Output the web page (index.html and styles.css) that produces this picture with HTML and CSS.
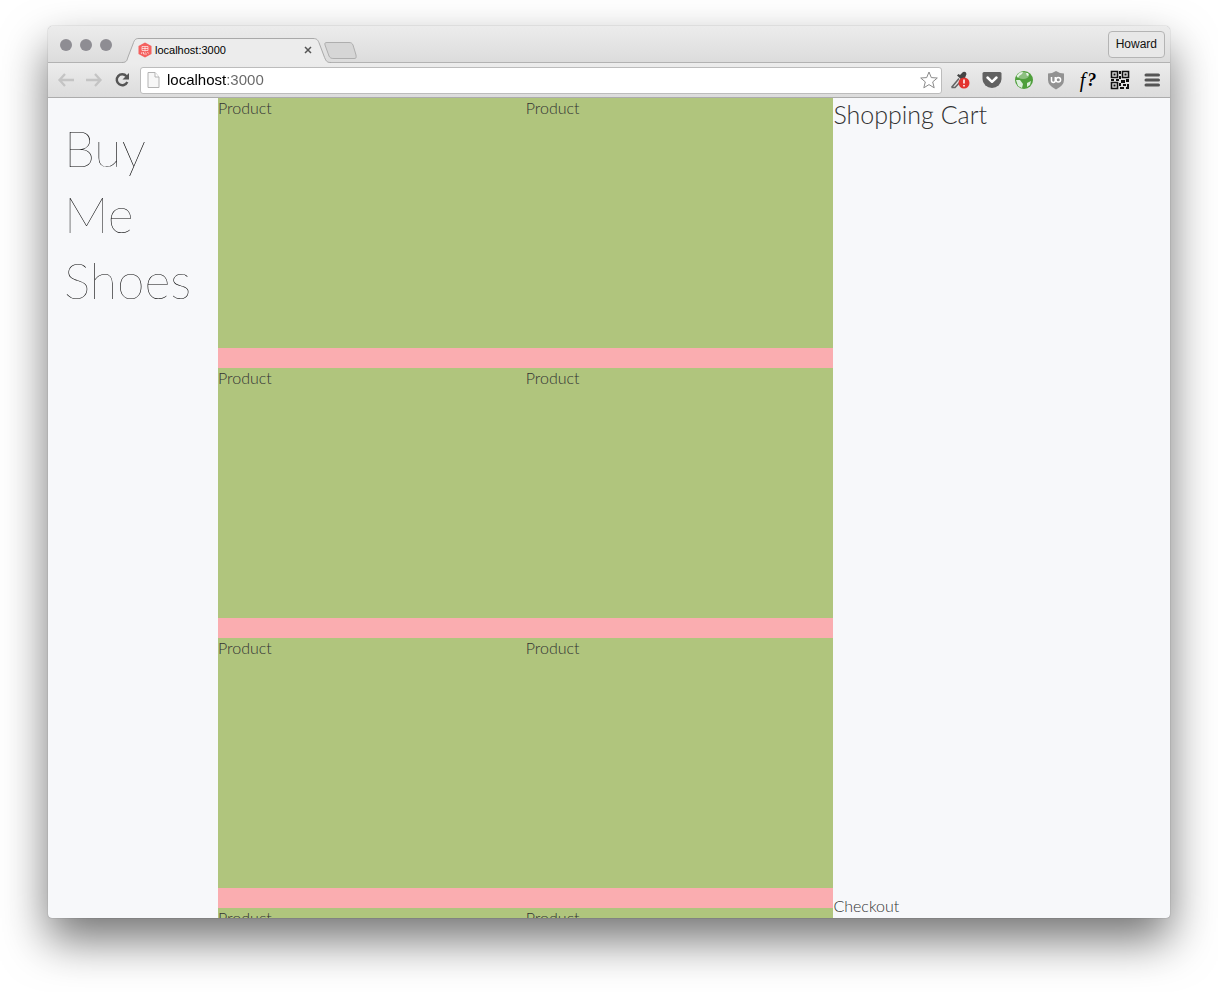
FILE: index.html
```html
<!DOCTYPE html>
<html lang="en">
<head>
<meta charset="utf-8">
<title>Buy Me Shoes</title>
<link rel="stylesheet" href="styles.css">
</head>
<body>
<div class="window">
  <header class="tabstrip">
    <div class="lights"><i class="light"></i><i class="light"></i><i class="light"></i></div>
    <div class="tab">
      <svg class="tab-shape" width="210" height="25" viewBox="0 0 210 25" aria-hidden="true">
        <path d="M0 24.500C5 24.500 5 22 6 19L11 6C12.500 1.500 13.500.5 17 .5H191C195 .5 196 2 197.500 6L202 18C204 23 204.500 24.500 209 24.500V25H0Z" fill="#ececec"/>
        <path d="M0 24.500C5 24.500 5 22 6 19L11 6C12.500 1.500 13.500.5 17 .5H191C195 .5 196 2 197.500 6L202 18C204 23 204.500 24.500 209 24.500" fill="none" stroke="#a9a9a9"/>
      </svg>
      <svg class="favicon" width="14" height="16" viewBox="0 0 14 16" aria-hidden="true">
        <path d="M7 .5 13.500 4v8L7 15.500.5 12V4Z" fill="#f4615f"/>
        <path d="M4 4.500h6v4H4zM7 4.500v4M4 6.500h6M3.500 12l.5-2M5.500 10v2H9M7 9.500l.5 1M9.500 10l1 1.500" fill="none" stroke="#fff" stroke-width=".8" opacity=".8"/>
      </svg>
      <span class="tab-title">localhost:3000</span>
      <button class="tab-close" aria-label="Close tab">
        <svg width="8" height="8" viewBox="0 0 8 8"><path d="M1 1l6 6M7 1L1 7" stroke="#555" stroke-width="1.500"/></svg>
      </button>
    </div>
    <button class="new-tab" aria-label="New tab">
      <svg width="34" height="18" viewBox="0 0 34 18"><path d="M3 .5H25C27 .5 28 1 29 3L32 13C32.500 16 32 16.500 30 16.500H10C7 16.500 6 16 5 14L1 3C.5 1 1 .5 3 .5Z" fill="#d6d6d6" stroke="#aeaeae"/></svg>
    </button>
    <button class="profile">Howard</button>
  </header>
  <nav class="toolbar">
    <button class="nav-button" aria-label="Back"><svg width="18" height="16" viewBox="0 0 18 16"><path d="M8 2 2.500 8 8 14M3 8H17" fill="none" stroke="#c4c4c4" stroke-width="2.300"/></svg></button>
    <button class="nav-button" aria-label="Forward"><svg width="18" height="16" viewBox="0 0 18 16"><path d="M10 2 15.500 8 10 14M15 8H1" fill="none" stroke="#c4c4c4" stroke-width="2.300"/></svg></button>
    <button class="nav-button" aria-label="Reload"><svg width="16" height="16" viewBox="0 0 16 16"><path d="M12.500 4.200A5.500 5.500 0 1 0 13.300 10" fill="none" stroke="#555" stroke-width="2.400"/><path d="M15 1v6.500H8.500Z" fill="#555"/></svg></button>
    <div class="address">
      <svg width="13" height="16" viewBox="0 0 13 16" aria-hidden="true"><path d="M1 .5h7L12 5v10.500H1z" fill="#f7f7f7" stroke="#b3b3b3"/><path d="M8 .5V5h4" fill="#fff" stroke="#b3b3b3"/></svg>
      <input class="url" type="text" value="localhost:3000" aria-label="Address">
      <button class="star" aria-label="Bookmark"><svg width="18" height="18" viewBox="0 0 18 18"><path d="M9 1l2.300 5.600 6 .4-4.600 3.900 1.500 5.900L9 13.600l-5.200 3.200 1.500-5.900L.7 7l6-.4Z" fill="#fff" stroke="#8a8a8a" stroke-linejoin="round"/></svg></button>
    </div>
    <div class="extensions">
      <button class="ext" aria-label="Color picker"><svg width="20" height="20" viewBox="0 0 20 20"><path d="M1.500 17.500 9 8.500M1.500 17.500H5L11 11" fill="none" stroke="#666" stroke-width="1.600"/><path d="M7 5.500 8.500 4 10 5 13 2q3-1 3.500 2L15 8l1 2-2 2Z" fill="#444"/><circle cx="14" cy="13" r="5.500" fill="#e3342f"/><path d="M14 9.500v4M14 15v1.500" stroke="#fff" stroke-width="1.600"/></svg></button>
      <button class="ext" aria-label="Pocket"><svg width="20" height="18" viewBox="0 0 20 18"><path d="M2 1h16q1.500 0 1.500 1.500V8a9.500 9 0 0 1-19 0V2.500Q.5 1 2 1Z" fill="#626262"/><path d="M5.500 6.500 10 10.800l4.500-4.300" fill="none" stroke="#fff" stroke-width="2.500" stroke-linecap="round" stroke-linejoin="round"/></svg></button>
      <button class="ext" aria-label="Globe"><svg width="20" height="20" viewBox="0 0 20 20"><circle cx="10" cy="10" r="9" fill="#4f9f3c"/><path d="M2.500 6 6 2.500 9 2 8 4 5 6 4 8ZM12 3l2 0 1 2-2 1ZM2 10l4 0 3 4-1 4-4-2ZM13 13l4-2-1 4-3 2Z" fill="#dcefdc"/><ellipse cx="9" cy="5.500" rx="6" ry="3.500" fill="#fff" opacity=".35"/></svg></button>
      <button class="ext" aria-label="uBlock Origin"><svg width="18" height="20" viewBox="0 0 18 20"><path d="M9 1q4 2.500 8 2.500V10q0 5.500-8 9.500Q1 15.500 1 10V3.500Q5 3.500 9 1Z" fill="#929292"/><path d="M4.500 7v3.500a1.900 1.900 0 0 0 3.800 0V7" fill="none" stroke="#fff" stroke-width="1.500"/><circle cx="11.300" cy="9.800" r="2.300" fill="none" stroke="#fff" stroke-width="1.500"/></svg></button>
      <button class="ext font-finder">f<span class="font-finder-mark">?</span></button>
      <button class="ext" aria-label="QR code"><svg width="20" height="20" viewBox="0 0 20 20"><path d="M1.500 1.500h6v6h-6zM12.500 1.500h6v6h-6zM1.500 12.500h6v6h-6z" fill="none" stroke="#111" stroke-width="1.600"/><path d="M3.500 3.500h2v2h-2zM14.500 3.500h2v2h-2zM3.500 14.500h2v2h-2zM9 1h2v3H9zM9 6h2v3H9zM1 9h3v2H1zM6 9h3v2H6zM11 10h4v3h-4zM16 9h3v3h-3zM9 13h2v3H9zM13 14h3v2h-3zM17 14h2v5h-3v-2h1zM10 17h4v2h-4z" fill="#111"/></svg></button>
      <button class="ext" aria-label="Menu"><svg width="16" height="16" viewBox="0 0 16 16"><path d="M2 3h12.500M2 8h12.500M2 13h12.500" stroke="#555" stroke-width="3" stroke-linecap="round"/></svg></button>
    </div>
  </nav>
  <div class="page">
    <aside class="sidebar"><h1 class="site-title">Buy Me Shoes</h1></aside>
    <main class="products">
      <div class="product">Product</div><div class="product">Product</div>
      <div class="product">Product</div><div class="product">Product</div>
      <div class="product">Product</div><div class="product">Product</div>
      <div class="product">Product</div><div class="product">Product</div>
    </main>
    <section class="cart">
      <h2 class="cart-title">Shopping Cart</h2>
      <button class="checkout">Checkout</button>
    </section>
  </div>
</div>
</body>
</html>
```

FILE: styles.css
```css
* { box-sizing: border-box; }

body {
  margin: 0;
  height: 100vh;
  padding: 26px 48px 74px;
  background: #fff;
  overflow: hidden;
  font-family: "Liberation Sans", Arial, sans-serif;
}

button {
  margin: 0;
  padding: 0;
  border: 0;
  background: none;
  font: inherit;
  color: inherit;
}

svg { display: block; flex: none; }

.window {
  display: flex;
  flex-direction: column;
  height: 100%;
  border-radius: 5px 5px 4px 4px;
  overflow: hidden;
  background: #f7f8fa;
  box-shadow: 0 0 1px rgba(0, 0, 0, .5), 0 22px 46px rgba(0, 0, 0, .55);
}

.tabstrip {
  display: flex;
  align-items: flex-end;
  height: 37px;
  flex: none;
  padding: 0 5px 0 12px;
  border-bottom: 1px solid #b2b2b2;
  background: linear-gradient(#ececec, #dcdcdc);
}

.lights { display: flex; gap: 8px; padding-bottom: 11px; }
.light { width: 12px; height: 12px; border-radius: 50%; background: #8e8d93; }

.tab {
  position: relative;
  display: flex;
  align-items: center;
  width: 210px;
  height: 25px;
  margin: 0 0 -1px 10px;
  padding: 0 20px 2px 16px;
  font-size: 11px;
  color: #000;
}
.tab-shape { position: absolute; inset: 0; }
.favicon, .tab-title, .tab-close { position: relative; }
.tab-title { margin-left: 3px; flex: 1; }

.new-tab { margin: 0 auto 2px -8px; }

.profile {
  align-self: center;
  height: 27px;
  padding: 0 7px;
  border: 1px solid #b4b4b4;
  border-radius: 4px;
  background: #e8e8e8;
  font-size: 12px;
  color: #111;
}

.toolbar {
  display: flex;
  align-items: center;
  height: 35px;
  flex: none;
  padding: 0 8px;
  border-bottom: 1px solid #acacac;
  background: linear-gradient(#ececec, #dcdcdc);
}

.nav-button { display: flex; justify-content: center; width: 20px; margin-right: 8px; }

.address {
  display: flex;
  align-items: center;
  flex: 1;
  height: 27px;
  padding: 0 3px 0 6px;
  border: 1px solid #bcbcbc;
  border-radius: 3px;
  background: #fff;
}
.url {
  flex: 1;
  min-width: 0;
  margin-left: 7px;
  padding: 0 0 1px;
  border: 0;
  font: 15px "Liberation Sans", Arial, sans-serif;
  color: #222;
  background: linear-gradient(90deg, #000 59px, #666 59px);
  -webkit-background-clip: text;
  background-clip: text;
  -webkit-text-fill-color: transparent;
}

.extensions { display: flex; gap: 12px; padding-left: 8px; }
.ext { display: flex; align-items: center; justify-content: center; width: 20px; height: 20px; }
.font-finder { font: italic 20px "Liberation Serif", "Times New Roman", serif; color: #000; gap: 2px; }
.font-finder-mark { font-weight: bold; font-size: 18px; }

.page {
  display: flex;
  flex: 1;
  min-height: 0;
  font-family: Lato, sans-serif;
  font-size: 16px;
  font-weight: 300;
  line-height: 20px;
  color: #333;
}

.sidebar { width: 170px; flex: none; padding: 17px 16px; }
.site-title { margin: 0; font-size: 50px; font-weight: 200; line-height: 66px; color: #000; }

.products {
  display: grid;
  grid-template-columns: 1fr 1fr;
  grid-auto-rows: 250px;
  row-gap: 20px;
  flex: 1;
  overflow: hidden;
  background: #faadb0;
}
.product { background: #b0c57d; }

.cart {
  display: flex;
  flex-direction: column;
  justify-content: space-between;
  align-items: flex-start;
  width: 30%;
  flex: none;
}
.cart-title { margin: 0; font-size: 25px; font-weight: 300; line-height: 32px; }
.checkout { font-weight: 300; padding-bottom: 2px; }
```
